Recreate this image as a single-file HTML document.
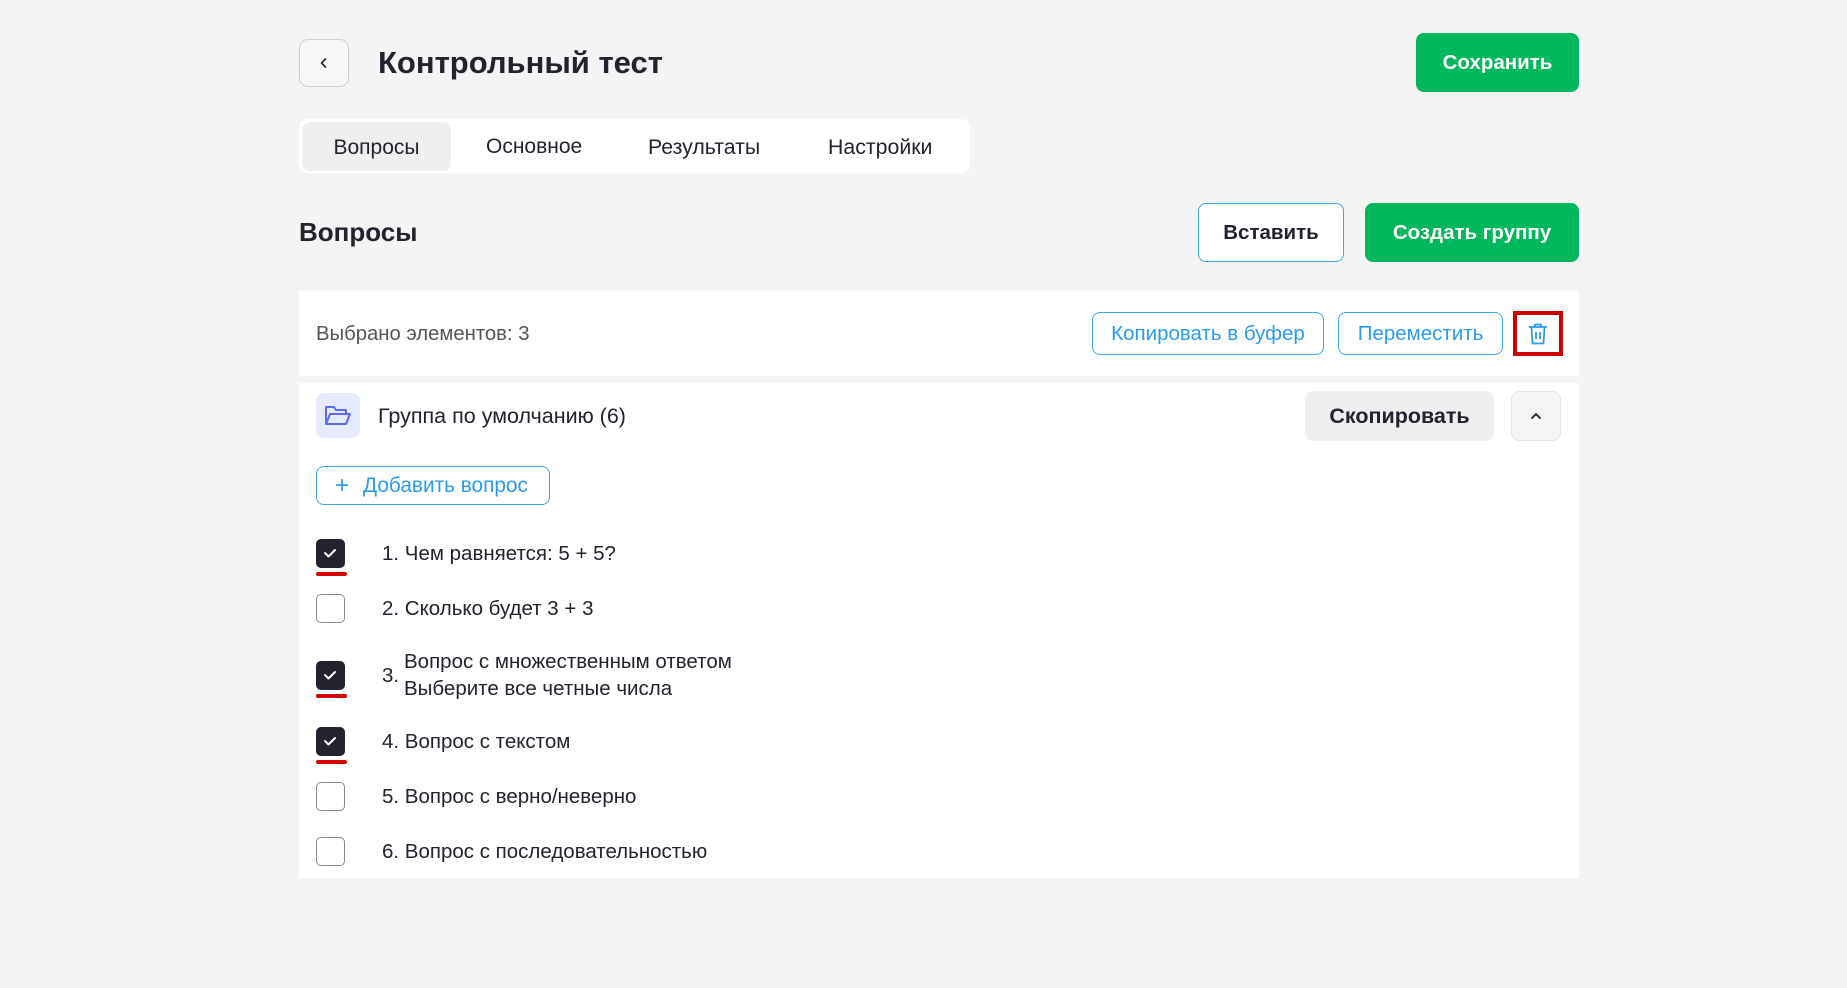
<!DOCTYPE html>
<html><head><meta charset="utf-8"><style>
*{box-sizing:border-box;margin:0;padding:0}
body{width:1847px;height:988px;background:#f4f4f4;font-family:"Liberation Sans",sans-serif;color:#23232f;position:relative;overflow:hidden}
.a{position:absolute}
.btn{position:absolute;display:flex;align-items:center;justify-content:center;border-radius:8px;font-size:20px}
.green{background:#00b85c;color:#fff;font-weight:bold}
.blue{border:1.5px solid #3aa8f5;color:#2a9cf0;background:#fff}
.cb{position:absolute;left:316px;width:29px;height:29px;border-radius:5px;border:1.5px solid #8a8a8a;background:#fff}
.cb.on{background:#23232f;border-color:#23232f}
.ul{position:absolute;left:316px;width:31px;height:4px;border-radius:2px;background:#d40000}
.q{position:absolute;left:382px;font-size:20.5px;line-height:27px}
</style></head><body>
<div class="btn" style="left:299px;top:39px;width:50px;height:48px;border:1px solid #cfcfcf;background:#f7f7f7;border-radius:9px">
<svg width="14" height="14" viewBox="0 0 14 14"><path d="M8.5 3L4.5 7l4 4" fill="none" stroke="#23232f" stroke-width="1.6" stroke-linecap="round" stroke-linejoin="round"/></svg></div>
<div class="a" style="left:378px;top:44px;font-size:31px;font-weight:bold;line-height:38px">Контрольный тест</div>
<div class="btn green" style="left:1416px;top:33px;width:163px;height:59px;font-size:20.5px">Сохранить</div>
<div class="a" style="left:299px;top:119px;width:671px;height:54px;background:#fff;border-radius:9px"></div>
<div class="btn" style="left:302px;top:122px;width:149px;height:49px;background:#efefef;font-size:21px;padding-top:2px">Вопросы</div>
<div class="a" style="left:486px;top:135px;font-size:21px">Основное</div>
<div class="a" style="left:648px;top:135px;font-size:21.3px">Результаты</div>
<div class="a" style="left:828px;top:135px;font-size:21.3px">Настройки</div>
<div class="a" style="left:299px;top:217px;font-size:26px;font-weight:bold">Вопросы</div>
<div class="btn" style="left:1198px;top:203px;width:146px;height:59px;border:1.5px solid #3aa8f5;background:#fff;font-weight:bold;font-size:20.5px">Вставить</div>
<div class="btn green" style="left:1365px;top:203px;width:214px;height:59px;font-size:20.5px">Создать группу</div>
<div class="a" style="left:299px;top:291px;width:1280px;height:85px;background:#fff"></div>
<div class="a" style="left:316px;top:323px;font-size:20.3px;color:#555">Выбрано элементов: 3</div>
<div class="btn blue" style="left:1092px;top:312px;width:232px;height:43px;font-size:20.5px">Копировать в буфер</div>
<div class="btn blue" style="left:1338px;top:312px;width:165px;height:43px;font-size:20.5px">Переместить</div>
<div class="btn" style="left:1513px;top:311px;width:50px;height:45px;border:4px solid #cc0000;border-radius:0;background:#fff">
<svg width="22" height="24" viewBox="0 0 22 24"><path d="M2 5h18M8 5V2.5h6V5M4.5 5l1 16.5h11l1-16.5M9 10v7M13 10v7" fill="none" stroke="#2a9cf0" stroke-width="1.8" stroke-linejoin="round"/></svg></div>
<div class="a" style="left:299px;top:383px;width:1280px;height:495px;background:#fff"></div>
<div class="btn" style="left:316px;top:393px;width:44px;height:45px;background:#e6eaff;border-radius:8px">
<svg width="28" height="24" viewBox="0 0 28 24"><path d="M2 20V3h8l2 3h10v4M2 20l4-10h20l-4 10z" fill="none" stroke="#5b6cf0" stroke-width="2" stroke-linejoin="round"/></svg></div>
<div class="a" style="left:378px;top:404px;font-size:21.5px">Группа по умолчанию (6)</div>
<div class="btn" style="left:1305px;top:391px;width:189px;height:50px;background:#efefef;font-weight:bold;font-size:21.5px">Скопировать</div>
<div class="btn" style="left:1511px;top:391px;width:50px;height:50px;background:#f5f5f5;border:1px solid #e6e6e6">
<svg width="14" height="14" viewBox="0 0 14 14"><path d="M3 9l4-4 4 4" fill="none" stroke="#23232f" stroke-width="1.8" stroke-linecap="round" stroke-linejoin="round"/></svg></div>
<div class="btn blue" style="left:316px;top:466px;width:234px;height:39px;justify-content:flex-start;padding-left:18px;font-size:20.8px"><span style="font-size:24px;margin-right:14px">+</span>Добавить вопрос</div>
<div class="cb on" style="top:539px"><svg width="26" height="26" viewBox="0 0 26 26"><path d="M8 13l3.5 3.5L18 10" fill="none" stroke="#fff" stroke-width="2" stroke-linecap="round" stroke-linejoin="round"/></svg></div>
<div class="ul" style="top:572px"></div>
<div class="q" style="top:540px">1. Чем равняется: 5 + 5?</div>
<div class="cb" style="top:594px"></div>
<div class="q" style="top:595px">2. Сколько будет 3 + 3</div>
<div class="cb on" style="top:661px"><svg width="26" height="26" viewBox="0 0 26 26"><path d="M8 13l3.5 3.5L18 10" fill="none" stroke="#fff" stroke-width="2" stroke-linecap="round" stroke-linejoin="round"/></svg></div>
<div class="ul" style="top:694px"></div>
<div class="q" style="top:662px">3.</div>
<div class="q" style="left:404px;top:648px">Вопрос с множественным ответом<br>Выберите все четные числа</div>
<div class="cb on" style="top:727px"><svg width="26" height="26" viewBox="0 0 26 26"><path d="M8 13l3.5 3.5L18 10" fill="none" stroke="#fff" stroke-width="2" stroke-linecap="round" stroke-linejoin="round"/></svg></div>
<div class="ul" style="top:760px"></div>
<div class="q" style="top:728px">4. Вопрос с текстом</div>
<div class="cb" style="top:782px"></div>
<div class="q" style="top:783px">5. Вопрос с верно/неверно</div>
<div class="cb" style="top:837px"></div>
<div class="q" style="top:838px">6. Вопрос с последовательностью</div>
</body></html>
